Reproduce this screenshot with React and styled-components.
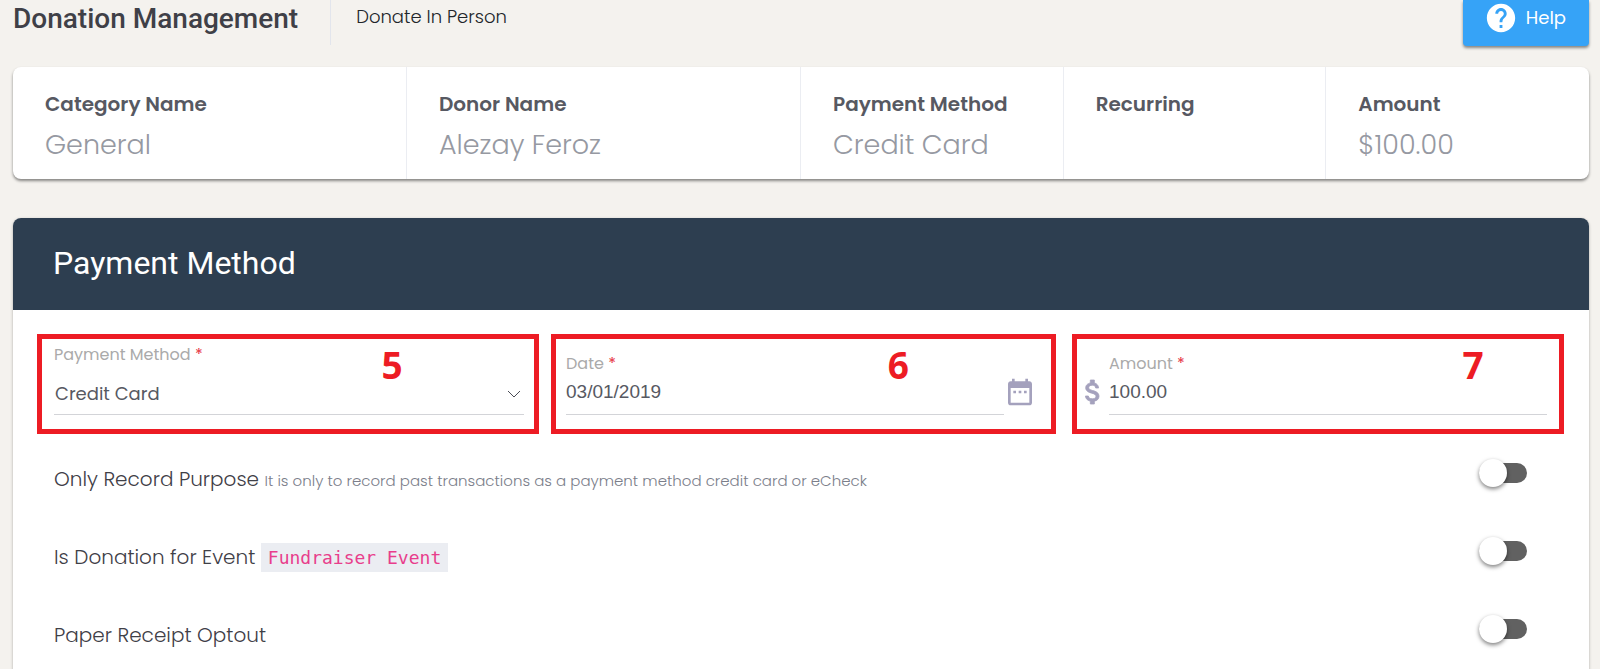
import React, { useState } from "react";
import styled, { createGlobalStyle } from "styled-components";

const summary = [
  { label: "Category Name", value: "General" },
  { label: "Donor Name", value: "Alezay Feroz" },
  { label: "Payment Method", value: "Credit Card" },
  { label: "Recurring", value: "" },
  { label: "Amount", value: "$100.00" },
];

const App = () => {
  const [form, setForm] = useState({
    method: "Credit Card",
    date: "03/01/2019",
    amount: "100.00",
  });
  const [options, setOptions] = useState({
    recordOnly: false,
    isEvent: false,
    receiptOptout: false,
  });

  const handleInputChange = (e) => {
    const { name, value } = e.target;
    setForm((prevState) => ({ ...prevState, [name]: value }));
  };

  const handleToggle = (e) => {
    const { name, checked } = e.target;
    setOptions((prevState) => ({ ...prevState, [name]: checked }));
  };

  return (
    <Page>
      <GlobalStyle />
      <TopBar>
        <PageTitle>Donation Management</PageTitle>
        <Breadcrumb href="#donate">Donate In Person</Breadcrumb>
        <HelpButton type="button">
          <svg width="34" height="34" viewBox="0 0 24 24" fill="currentColor">
            <path d="M12 2C6.48 2 2 6.48 2 12s4.48 10 10 10 10-4.48 10-10S17.52 2 12 2zm1 17h-2v-2h2v2zm2.07-7.75l-.9.92C13.45 12.9 13 13.5 13 15h-2v-.5c0-1.1.45-2.1 1.17-2.83l1.24-1.26c.37-.36.59-.86.59-1.41 0-1.1-.9-2-2-2s-2 .9-2 2H8c0-2.21 1.79-4 4-4s4 1.79 4 4c0 .88-.36 1.68-.93 2.25z" />
          </svg>
          Help
        </HelpButton>
      </TopBar>

      <SummaryCard>
        {summary.map((item) => (
          <SummaryItem key={item.label}>
            <SummaryLabel>{item.label}</SummaryLabel>
            <SummaryValue>{item.value}</SummaryValue>
          </SummaryItem>
        ))}
      </SummaryCard>

      <Panel>
        <PanelHeader>
          <PanelTitle>Payment Method</PanelTitle>
        </PanelHeader>

        <Fields>
          <FieldBox>
            <Field>
              <FieldLabel htmlFor="method">
                Payment Method <Required>*</Required>
              </FieldLabel>
              <SelectWrap>
                <Select
                  id="method"
                  name="method"
                  value={form.method}
                  onChange={handleInputChange}
                >
                  <option>Credit Card</option>
                  <option>eCheck</option>
                  <option>Cash</option>
                </Select>
                <Chevron width="14" height="8" viewBox="0 0 14 8">
                  <path d="M1 1l6 6 6-6" fill="none" stroke="#4b4d56" />
                </Chevron>
              </SelectWrap>
            </Field>
            <Step $left="69%">5</Step>
          </FieldBox>

          <FieldBox $variant="date">
            <Field>
              <FieldLabel htmlFor="date">
                Date <Required>*</Required>
              </FieldLabel>
              <Input
                id="date"
                name="date"
                value={form.date}
                onChange={handleInputChange}
              />
            </Field>
            <IconButton type="button" aria-label="Open calendar">
              <svg width="32" height="32" viewBox="0 0 24 24" fill="currentColor">
                <path d="M9 11H7v2h2v-2zm4 0h-2v2h2v-2zm4 0h-2v2h2v-2zm2-7h-1V2h-2v2H8V2H6v2H5c-1.11 0-1.99.9-1.99 2L3 20c0 1.1.89 2 2 2h14c1.1 0 2-.9 2-2V6c0-1.1-.9-2-2-2zm0 16H5V9h14v11z" />
              </svg>
            </IconButton>
            <Step $left="67%">6</Step>
          </FieldBox>

          <FieldBox $variant="amount">
            <Currency width="32" height="32" viewBox="0 0 24 24">
              <path
                fill="currentColor"
                stroke="currentColor"
                strokeWidth="0.6"
                d="M11.8 10.9c-2.27-.59-3-1.2-3-2.15 0-1.09 1.01-1.85 2.7-1.85 1.78 0 2.44.85 2.5 2.1h2.21c-.07-1.72-1.12-3.3-3.21-3.81V3h-3v2.16c-1.94.42-3.5 1.68-3.5 3.61 0 2.31 1.91 3.46 4.7 4.13 2.5.6 3 1.48 3 2.41 0 .69-.49 1.79-2.7 1.79-2.06 0-2.87-.92-2.98-2.1h-2.2c.12 2.19 1.76 3.42 3.68 3.83V21h3v-2.15c1.95-.37 3.5-1.5 3.5-3.55 0-2.84-2.43-3.81-4.7-4.4z"
              />
            </Currency>
            <Field>
              <FieldLabel htmlFor="amount">
                Amount <Required>*</Required>
              </FieldLabel>
              <Input
                id="amount"
                name="amount"
                value={form.amount}
                onChange={handleInputChange}
              />
            </Field>
            <Step $left="80%">7</Step>
          </FieldBox>
        </Fields>

        <OptionRow>
          <OptionLabel htmlFor="recordOnly">
            Only Record Purpose{" "}
            <Hint>
              It is only to record past transactions as a payment method credit
              card or eCheck
            </Hint>
          </OptionLabel>
          <Toggle
            id="recordOnly"
            name="recordOnly"
            checked={options.recordOnly}
            onChange={handleToggle}
          />
        </OptionRow>
        <OptionRow>
          <OptionLabel htmlFor="isEvent">
            Is Donation for Event <Code>Fundraiser Event</Code>
          </OptionLabel>
          <Toggle
            id="isEvent"
            name="isEvent"
            checked={options.isEvent}
            onChange={handleToggle}
          />
        </OptionRow>
        <OptionRow>
          <OptionLabel htmlFor="receiptOptout">Paper Receipt Optout</OptionLabel>
          <Toggle
            id="receiptOptout"
            name="receiptOptout"
            checked={options.receiptOptout}
            onChange={handleToggle}
          />
        </OptionRow>
      </Panel>
    </Page>
  );
};

const GlobalStyle = createGlobalStyle`
  * {
    box-sizing: border-box;
  }

  body {
    margin: 0;
    background: #f4f2ee;
    font-family: Poppins, "Open Sans", sans-serif;
    font-weight: 300;
    color: #3f4047;
    overflow: hidden;
  }
`;

const Page = styled.div`
  padding: 0 11px 0 13px;
`;

const TopBar = styled.header`
  display: flex;
  align-items: flex-start;
  height: 67px;
`;

const PageTitle = styled.h1`
  margin: 0;
  padding-right: 32px;
  font: 500 28px/38px Roboto, sans-serif;
  color: #3f4047;
`;

const Breadcrumb = styled.a`
  height: 45px;
  padding-left: 25px;
  border-left: 1px solid #e2e5ec;
  font-size: 18px;
  line-height: 34px;
  color: #212529;
  text-decoration: none;
`;

const HelpButton = styled.button`
  display: flex;
  align-items: center;
  gap: 8px;
  height: 46px;
  margin-left: auto;
  padding: 0 23px 11px 21px;
  border: 0;
  border-radius: 0 0 4px 4px;
  background: #36a3f7;
  box-shadow: 0 2px 3px rgba(0, 0, 0, 0.45);
  font-family: inherit;
  font-size: 18px;
  color: #fff;
  cursor: pointer;
`;

const SummaryCard = styled.section`
  display: grid;
  grid-template-columns: 3fr 3fr 2fr 2fr 2fr;
  border-radius: 8px;
  background: #fff;
  box-shadow: 0 2px 3px rgba(0, 0, 0, 0.45);
`;

const SummaryItem = styled.div`
  height: 112px;
  padding: 22px 32px 0;

  &:not(:last-child) {
    border-right: 1px solid #ebedf2;
  }
`;

const SummaryLabel = styled.div`
  font-size: 20px;
  font-weight: 600;
  line-height: 30px;
  color: #575962;
`;

const SummaryValue = styled.div`
  padding-top: 5px;
  font-size: 27px;
  line-height: 42px;
  color: #9699a2;
`;

const Panel = styled.section`
  min-height: 480px;
  margin-top: 39px;
  border-radius: 8px 8px 0 0;
  background: #fff;
  box-shadow: 0 1px 3px rgba(0, 0, 0, 0.3);
`;

const PanelHeader = styled.div`
  padding: 23px 40px 25px;
  border-radius: 8px 8px 0 0;
  background: #2d3e50;
`;

const PanelTitle = styled.h2`
  margin: 0;
  font: 400 32px/44px Roboto, sans-serif;
  color: #fff;
`;

const Fields = styled.div`
  display: grid;
  grid-template-columns: 502fr 509fr 492fr;
  gap: 12px;
  padding: 24px 25px 0 24px;
`;

const boxPadding = {
  method: "0 10px 14px 12px",
  date: "0 15px 14px 10px",
  amount: "0 12px 14px 0",
};

const FieldBox = styled.div`
  position: relative;
  display: flex;
  align-items: flex-end;
  height: 100px;
  margin-right: ${(props) => (props.$variant === "date" ? "4px" : "0")};
  padding: ${(props) => boxPadding[props.$variant || "method"]};
  border: 5px solid #ed1c24;
`;

const Field = styled.div`
  flex: 1;
  min-width: 0;
`;

const FieldLabel = styled.label`
  display: block;
  font-size: 16px;
  font-weight: 400;
  line-height: 24px;
  color: #aaa;
`;

const Required = styled.span`
  color: #e6333f;
`;

const Input = styled.input`
  display: block;
  width: 100%;
  height: 39px;
  padding: 0 0 7px;
  border: 0;
  border-bottom: 1px solid #d3d4d8;
  background: none;
  font: 400 19px "Liberation Sans", Arial, sans-serif;
  color: #575962;
  outline: none;
`;

const SelectWrap = styled.div`
  position: relative;
  padding-top: 10px;
`;

const Select = styled.select`
  display: block;
  appearance: none;
  width: 100%;
  height: 38px;
  padding: 0 24px 4px 1px;
  border: 0;
  border-bottom: 1px solid #d3d4d8;
  background: none;
  font: 400 18px Poppins, "Open Sans", sans-serif;
  color: #575962;
  outline: none;
`;

const Chevron = styled.svg`
  position: absolute;
  right: 3px;
  bottom: 17px;
  pointer-events: none;
`;

const IconButton = styled.button`
  display: flex;
  margin-bottom: 7px;
  padding: 0;
  border: 0;
  background: none;
  color: #a4a1bd;
  cursor: pointer;
`;

const Currency = styled.svg`
  margin-bottom: 7px;
  color: #a4a1bd;
`;

const Step = styled.span`
  position: absolute;
  top: 0;
  left: ${(props) => props.$left};
  font: 700 37px/52px "Open Sans", sans-serif;
  color: #ed1c24;
`;

const OptionRow = styled.div`
  display: flex;
  align-items: center;
  justify-content: space-between;
  height: 78px;
  padding: 0 62px 0 41px;
`;

const OptionLabel = styled.label`
  padding-top: 12px;
  font-size: 20px;
`;

const Hint = styled.small`
  font-size: 15px;
  color: #7b7e8a;
`;

const Code = styled.code`
  padding: 4px 7px;
  background: #ebedf2;
  font: 400 18px "DejaVu Sans Mono", monospace;
  color: #e83e8c;
`;

const Toggle = styled.input.attrs({ type: "checkbox", role: "switch" })`
  appearance: none;
  display: flex;
  align-items: center;
  width: 48px;
  height: 20px;
  margin: 0;
  border-radius: 10px;
  background: #616161;
  cursor: pointer;

  &::before {
    content: "";
    width: 28px;
    height: 28px;
    border-radius: 50%;
    background: #fff;
    box-shadow: 0 2px 4px rgba(0, 0, 0, 0.5);
  }

  &:checked {
    justify-content: flex-end;
    background: #36a3f7;
  }
`;

export default App;
